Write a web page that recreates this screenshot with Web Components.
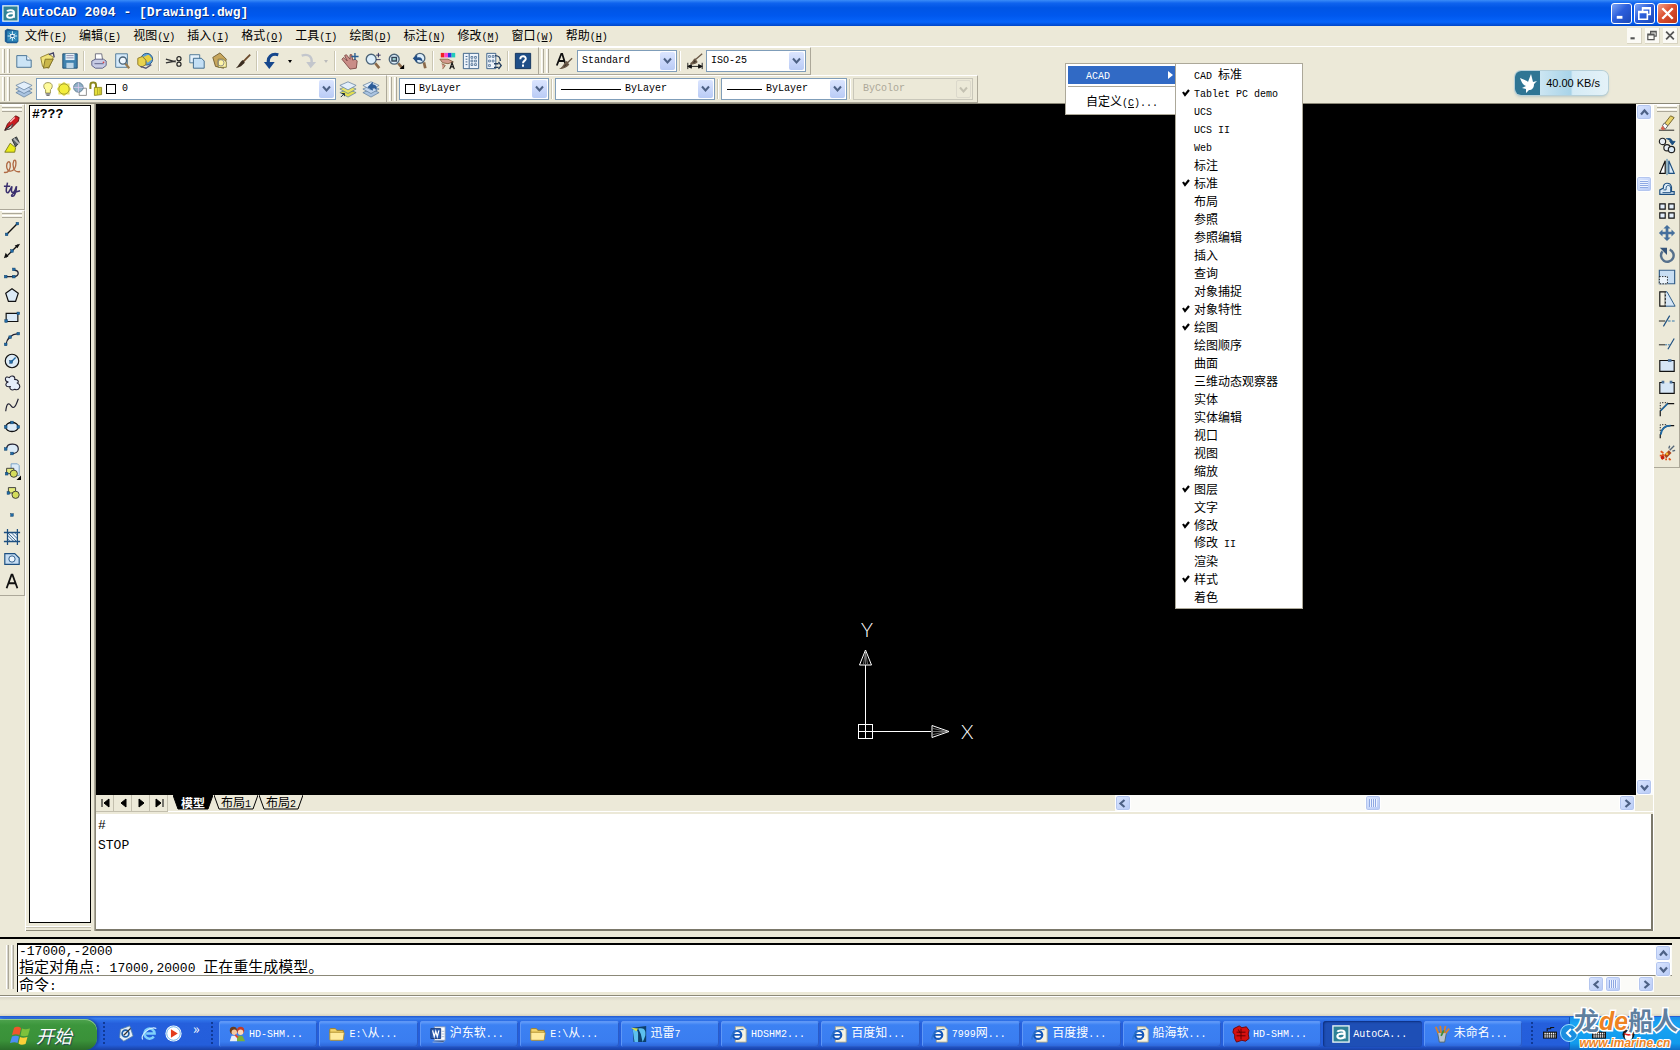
<!DOCTYPE html>
<html lang="zh-CN">
<head>
<meta charset="utf-8">
<title>AutoCAD 2004 - [Drawing1.dwg]</title>
<style>
html,body{margin:0;height:100%}
body{background:#ece9d8;overflow:hidden;font:12px/16px "Noto Sans CJK SC","Liberation Sans",sans-serif;color:#000}
</style>
</head>
<body>
<cad-app></cad-app>
<script>
const page='<path d="M3 4h10l4 4v8H3z" fill="#d5eafa" stroke="#4a7494"/>';
const ie='<path d="M6 2h9l3 3v14H6z" fill="#f6f4e4" stroke="#aaa78c"/><circle cx="8" cy="11" r="4.500" fill="#fff" stroke="#1457b8" stroke-width="2.400"/><path d="M4 11h8" stroke="#1457b8" stroke-width="1.800"/><path d="M1 16C1 9 8 4 15 5" fill="none" stroke="#2c74cc" stroke-width="1.500"/>';
const folder='<path d="M2 5q0-1 1-1h5l2 2h7v3H2z" fill="#f3d46c" stroke="#a07d1c"/><path d="M2 16V9q0-1 1-1h14q1 0 1 1l-1 7q0 1-1 1H3q-1 0-1-1z" fill="#ffea9c" stroke="#b18d28"/>';
const lens=(x,y,r)=>`<path d="M${x+r-1} ${y+r-1}L17 18" stroke="#8b6a4a" stroke-width="3"/><circle cx="${x}" cy="${y}" r="${r}" fill="#dceefb" stroke="#4c6478" stroke-width="1.500"/>`;
const stack=(c)=>`<path d="M1 14l9-4 9 4-9 5z" fill="${c}" stroke="#5e7c9c" stroke-width=".8"/><path d="M1 10l9-4 9 4-9 5z" fill="#c2d6ee" stroke="#5e7c9c" stroke-width=".8"/><path d="M1 6l9-4 9 4-9 5z" fill="#e3effb" stroke="#5e7c9c" stroke-width=".8"/>`;
const dot=(x,y)=>`<rect x="${x-1.5}" y="${y-1.5}" width="3" height="3" fill="#206ba6" stroke="#123f66" stroke-width=".5"/>`;
const ICONS={
acad:'<rect x="1" y="1" width="18" height="18" fill="#2f8296" stroke="#e8f4f6" stroke-width="1.500"/><path d="M6 7.500c1-2 8-2 8 1V15M14 10c-4-1-8 0-8 2.600 0 3 6 3.400 8 0" fill="none" stroke="#fff" stroke-width="2.400"/>',
dwg:'<path d="M1 3l3-2 14 2v14l-2 2H4l-3-2z" fill="#1c5c94"/><path d="M4 4h13v13H4z" fill="#2e86b8"/><path d="M10.500 4v12M4.500 10h12M7 7l7 7M14 7l-7 7" stroke="#d9f2ff" stroke-width="1.200"/><rect x="8.500" y="8" width="4" height="4" fill="#1c5c94" stroke="#fff"/>',
newf:'<path d="M2 4h11l5 5v8H2z" fill="#cbe4f6" stroke="#3f6c90"/><path d="M13 4v5h5" fill="#f2f9ff" stroke="#3f6c90"/>',
open:'<path d="M3 6l9-4 5 4-5 12-7-2z" fill="#f1e37a" stroke="#8f7d2c"/><path d="M8 8h9l-5 9-6 1z" fill="#c9b64a" stroke="#7c6d25"/><path d="M12 3l5-2 1 5" fill="none" stroke="#446" stroke-width="1.500"/>',
save:'<path d="M2 2h16v16H2z" fill="#3f82ae" stroke="#1e4b6e"/><path d="M5 2h10v7H5z" fill="#e6f1f8"/><path d="M6 12h8v6H6z" fill="#bcd6e8"/><path d="M6 4h8M6 6.500h8" stroke="#88a"/>',
print:'<path d="M6 9V2h7l1 7" fill="#fff" stroke="#667"/><path d="M2 10l4-2h9l3 2v5l-4 3H6l-4-3z" fill="#c7cbe4" stroke="#565a80"/><path d="M5 13h10" stroke="#565a80"/><circle cx="15" cy="11.500" r="1" fill="#d44"/>',
preview:'<path d="M3 2h13v15H3z" fill="#d5eafa" stroke="#4a7494"/><path d="M13 12l5 6" stroke="#9a7b4f" stroke-width="2.500"/><circle cx="11" cy="9.500" r="4" fill="#f0f8ff" stroke="#4c6478" stroke-width="1.500"/>',
publish:'<circle cx="12" cy="8" r="6.500" fill="#5da0d8" stroke="#255784"/><path d="M8 5c3 1 4-3 7-1l3 4-5 4z" fill="#e8cf3e"/><path d="M2 7l5-2 4 4v5l-5 3-4-3z" fill="#e8d34f" stroke="#8a7420"/><path d="M5 16l6 2 6-4" fill="none" stroke="#557" stroke-width="1.500"/>',
cut:'<path d="M1 8l11 3M1 12l11-2" stroke="#333" stroke-width="1.500"/><circle cx="15.500" cy="7.500" r="2.300" fill="none" stroke="#222" stroke-width="1.300"/><circle cx="15.500" cy="13.500" r="2.300" fill="none" stroke="#222" stroke-width="1.300"/>',
copy:'<path d="M2 3h11v9H2z" fill="#e4f1fb" stroke="#4a7494"/><path d="M6 7h9l3 3v8H6z" fill="#c3dff5" stroke="#356287"/>',
paste:'<path d="M2 6l8-5 7 7-3 10-9-2z" fill="#c7a65c" stroke="#6e5a2c"/><path d="M8 8h6l3 3v6H8z" fill="#fff6a8" stroke="#7d7540"/><circle cx="11" cy="12" r="3.500" fill="none" stroke="#888"/>',
match:'<path d="M18 3l-8 8" stroke="#6b4a2c" stroke-width="2"/><path d="M10 9l2 3c-3 3-5 5-10 6 4-3 4-7 8-9z" fill="#3b2d20"/>',
undo:'<path d="M17 3C9 1 5 6 6 12" fill="none" stroke="#15468c" stroke-width="3.500"/><path d="M1 11h12l-6 8z" fill="#15468c"/>',
redo:'<path d="M3 4c8-3 12 2 11 8" fill="none" stroke="#c3c6cc" stroke-width="2.500"/><path d="M8 11h11l-6 7z" fill="#c3c6cc"/>',
pan:'<path d="M1 8l2-2 4 4-3-6 2-1 4 5V3h2l1 6 3-1 2 2-1 8-7 1z" fill="#c98d87" stroke="#7d4845"/><path d="M15.500 1v8M11.500 5h8" stroke="#2a5e92" stroke-width="1.500"/>',
zoomrt:lens(8,8,5.5)+'<path d="M16 1v5M13.500 3.500h5M13.500 8.500h5" stroke="#225"/>',
zoomwin:lens(8,8,5.5)+'<path d="M5.500 6h5v4h-5z" fill="#9cc" stroke="#345" stroke-width="1.500"/><path d="M19 14v5h-5z" fill="#000"/>',
zoomprev:lens(11,7,5.5)+'<path d="M3 7l5-4v3c4-1 6 1 6 5-2-2-3-2-6-2v3z" fill="#234f86"/>',
props:'<path d="M2 1h4v5H2z" fill="#e22"/><path d="M6 1h4v5H6z" fill="#f4c"/><path d="M10 1h4v5h-4z" fill="#33d"/><path d="M14 1h4v5h-4z" fill="#2cb"/><path d="M1 8h9l6 3-6 2-6-1zM3 13l4 2-3 4" fill="#d49a8e" stroke="#864"/><path d="M12 19l2.500-7 2.500 7M13 16.500h3" fill="none" stroke="#111" stroke-width="1.300"/>',
dc:'<path d="M1.500 1.500h17v17h-17z" fill="#eef4fb" stroke="#335a84"/><path d="M8 2v16" stroke="#335a84"/><path d="M4 5h2M4 8h2M4 11h2M4 14h2" stroke="#335a84"/><path d="M10 5h2v2h-2zM14 5h2v2h-2zM10 9h2v2h-2zM14 9h2v2h-2zM10 13h2v2h-2zM14 13h2v2h-2z" fill="#fff" stroke="#335a84" stroke-width=".8"/>',
palettes:'<path d="M2 1.500h10v17H2z" fill="#eef4fb" stroke="#335a84"/><path d="M4 4h2v2H4zM8 4h2v2H8zM4 9h2v2H4zM8 9h2v2H8zM4 14h2v2H4z" fill="#fff" stroke="#335a84" stroke-width=".8"/><path d="M11 4c5 0 6 2 6 6M10 13h5M10 17h5M15 11l3 4-3 4" fill="none" stroke="#223c5c" stroke-width="1.500"/>',
help:'<path d="M1.500 1.500h17v17h-17z" fill="#1f4f88" stroke="#0d2f59"/><path d="M7 8c0-5 7-4 6 0-.5 2-3 2-3 4.500M10 14v2.500" fill="none" stroke="#fff" stroke-width="2.200"/>',
tstyle:'<path d="M2 15L7 2h1l4 13M4 10h6" fill="none" stroke="#111" stroke-width="2"/><path d="M19 7l-7 7M13 11l2 3c-2 2-4 4-8 4 3-2 3-5 6-7z" stroke="#6b5a48" fill="#3b3128" stroke-width="1.500"/>',
dstyle:'<path d="M2 12v7M18 12v7M2 16h16M6 14l-4 2 4 2zM14 14l4 2-4 2z" fill="#111" stroke="#111"/><path d="M18 2l-8 7M10 8l2 3c-2 2-4 2-7 2 3-1 3-4 5-5z" stroke="#6b5a48" fill="#3b3128" stroke-width="1.500"/>',
layers:stack('#a9c3e0'),
layercur:stack('#e3de4e').replace('#c2d6ee','#e8e36a')+'<path d="M2 19l4-4M3 15h3v3" stroke="#123" fill="none"/>',
layerprev:stack('#a9c3e0')+'<path d="M6 8l6-6v3c4 0 5 3 4 7-1-3-3-3-4-3v3z" fill="#2b5c98"/>',
bulb:'<path d="M10 2c7 0 6 7 3 9v4H7v-4C4 9 3 2 10 2z" fill="#fffb9c" stroke="#8b8440"/><path d="M7 16h6M8 18h4" stroke="#777" stroke-width="1.500"/>',
sun:'<path d="M10 1l3 2 4 0 0 4 2 3-2 3 0 4-4 0-3 2-3-2-4 0 0-4-2-3 2-3 0-4 4 0z" fill="#ece56b"/><circle cx="10" cy="10" r="6.500" fill="#f3ee3c" stroke="#8f8a22"/>',
vp:'<path d="M9 9h9v9H9z" fill="#fff" stroke="#777"/><circle cx="8" cy="8" r="6" fill="#8fb0c6" stroke="#55738a"/><path d="M8 2v12M2 8h12" stroke="#dce"/>',
lock:'<path d="M3 10V5c0-4 7-4 7 0v4" fill="none" stroke="#8a861c" stroke-width="2.500"/><path d="M8 8h9v9l-9 1z" fill="#e6e03c" stroke="#837d18"/><path d="M12 8v9M15 8v9" stroke="#a49e26"/>',
pen:'<path d="M2 18l3-7L14 2l4 2-1 4-8 8z" fill="#cc1c20" stroke="#5c1010"/><path d="M8 9l5-5" stroke="#fbb" stroke-width="1.500"/><path d="M2 18l7-2 2-5z" fill="#d8d8d8" stroke="#444"/><path d="M2 18l6-5" stroke="#222"/>',
marker:'<path d="M10 4l5-3 3 6-4 5z" fill="#596265" stroke="#2a2f30"/><path d="M8 8l6 5-1 5H2z" fill="#e9ea18" stroke="#77781c"/><path d="M12 3l6 6" stroke="#bbb" stroke-width="2"/>',
scribble:'<path d="M1 16c5 1 8-4 7-10-1-4-4-1-4 3 0 8 8 7 10 0 1-5 0-8-2-6-2 4-1 14 7 12" fill="none" stroke="#b06a44" stroke-width="1.500"/>',
ty:'<path d="M5 3c-1 5-3 12 1 11l4-7c-1 5-1 7 1 7s3-5 4-7c0 5-2 12-5 11-2-1 3-5 9-6M1 7h7" fill="none" stroke="#3a2f6e" stroke-width="1.700"/>',
line:'<path d="M4 16L16 4" stroke="#111" stroke-width="1.500"/>'+dot(4,16)+dot(16,4),
xline:'<path d="M3 17L17 3" stroke="#111" stroke-width="1.500"/><path d="M1 18l2-6 3 4zM19 2l-6 2 3 3z" fill="#111"/>'+dot(10,10),
pline:'<path d="M3 14h9c7 0 6-8 0-7" fill="none" stroke="#223" stroke-width="1.500"/>'+dot(3,14)+dot(12,14)+dot(12,6),
polygon:'<path d="M10 3l7 5-3 9H6L3 8z" fill="#dcebf7" stroke="#111" stroke-width="1.300"/>',
rect:'<path d="M3.500 6h13v9h-13z" fill="#dcebf7" stroke="#111" stroke-width="1.300"/>'+dot(3.5,14.5)+dot(17,6),
arc:'<path d="M3 17Q5 5 17 4" fill="none" stroke="#223" stroke-width="1.300"/>'+dot(3,16)+dot(8,8)+dot(17,4),
circle:'<circle cx="10" cy="10" r="7.500" fill="#dcebf7" stroke="#111" stroke-width="1.300"/><path d="M9 11l5-5" stroke="#206ba6" stroke-width="1.500"/>'+dot(9,11),
cloud:'<path d="M6 9C1 8 2 1 7 4c2-3 7-2 6 2 4 0 5 3 3 4 5 3 2 9-3 7-4 2-6-1-5-3-6 1-6-4-2-5z" fill="#e6eefa" stroke="#223" stroke-width="1.200"/>',
spline:'<path d="M3 17C4 8 6 7 9 11s5 1 8-8" fill="none" stroke="#223" stroke-width="1.300"/>',
ellipse:'<ellipse cx="10" cy="10" rx="7" ry="5" fill="#dcebf7" stroke="#111" stroke-width="1.400"/>'+dot(3,10)+dot(17,10)+dot(10,5),
earc:'<path d="M4 9c1-6 13-6 13 1 0 3-3 5-7 5" fill="#dcebf7" stroke="#223" stroke-width="1.400"/>'+dot(3,10)+dot(10,15),
iblock:'<path d="M9 2h7l2 2v11H9z" fill="#dcebf7" stroke="#6f9cc4"/><path d="M4 7h8v6H4z" fill="#e3ea7a" stroke="#333"/><circle cx="12" cy="13" r="4" fill="#d4dc5c" stroke="#333"/>'+dot(4,13)+'<path d="M20 15v5h-5z" fill="#000"/>',
mblock:'<path d="M6 4h8v6H6z" fill="#e3ea7a" stroke="#333"/><circle cx="14" cy="12" r="4" fill="#d4dc5c" stroke="#333"/>'+dot(6,10),
point:dot(10,10),
hatch:'<path d="M5 5h11v10H5z" fill="#e8f1fa"/><path d="M5 8l7 7M5 5l10 10M9 5l7 7M13 5l3 3M5 12l3 3" stroke="#356287"/><path d="M1 5h18M1 15h18M5 1v18M16 1v18" stroke="#1d4f80" stroke-width="1.400"/>',
region:'<path d="M2 4h11l5 5v7H2z" fill="#c6ddf3" stroke="#1d4f80" stroke-width="1.300"/><circle cx="10" cy="10" r="3.500" fill="#eef6fd" stroke="#1d4f80"/>',
mtext:'<path d="M4 18L9.500 3h1L16 18M6 12.500h8" fill="none" stroke="#111" stroke-width="2"/>',
erase:'<path d="M1 18h17" stroke="#111"/><path d="M7 11l7-9 4 2-7 9z" fill="#e9d26a" stroke="#6b5c24"/><path d="M5 13l2-3 4 3-3 4z" fill="#fff" stroke="#555"/><path d="M3 16l2-3 3 4-3 1z" fill="#d8604c"/>',
rcopy:'<circle cx="5" cy="6" r="3.500" fill="#e8eef6" stroke="#222" stroke-width="1.300"/><circle cx="10" cy="13" r="3.500" fill="#e8eef6" stroke="#222" stroke-width="1.300"/><circle cx="15" cy="15" r="3.500" fill="#dcebf7" stroke="#222" stroke-width="1.300"/><path d="M9 3c5-1 7 1 7 4M13 6h6l-3 4z" fill="#1d4f80" stroke="#1d4f80"/>',
mirror:'<path d="M8 3v14H2z" fill="#fff" stroke="#111" stroke-width="1.300"/><path d="M12 3v14h6z" fill="#dcebf7" stroke="#1d4f80" stroke-width="1.300"/><path d="M10 1v18" stroke="#206ba6"/>',
offset:'<path d="M2 16h16v-3h-3V8c-1-6-10-6-9 1l-4 2z" fill="#dcebf7" stroke="#1d4f80" stroke-width="1.300"/><path d="M5 14h9V9c0-4-5-4-5 0v2H6" fill="none" stroke="#1d4f80"/>',
array:'<path d="M2 2h6v6H2zM12 2h6v6h-6zM2 12h6v6H2zM12 12h6v6h-6z" fill="#e3eefa" stroke="#111" stroke-width="1.300"/>',
move:'<path d="M10 1l4 4h-2.500v3.500H15V6l4 4-4 4v-2.500h-3.500V15H14l-4 4-4-4h2.500v-3.500H5V14l-4-4 4-4v2.500h3.500V5H6z" fill="#456f9c"/>',
rotate:'<path d="M5 6a7 7 0 1 0 8-2" fill="none" stroke="#56708c" stroke-width="2.700"/><path d="M2 2h8v8z" fill="#365478"/>',
scale:'<path d="M1.500 2.500h17v15h-17z" fill="#c8def3" stroke="#355f8a" stroke-width="1.300"/><path d="M1.500 9.500h9v8h-9z" fill="#ecf4fb" stroke="#111" stroke-dasharray="1.500 1.500"/>',
stretch:'<path d="M8 2h2l9 16H8z" fill="#d6e6f6" stroke="#1d4f80"/><path d="M2 2h6v16H2z" fill="#f4f1e4" stroke="#111" stroke-width="1.300"/><path d="M8 3v14" stroke="#f4f1e4" stroke-dasharray="2"/>',
trim:'<path d="M1 10h7" stroke="#111"/><path d="M11 10h8" stroke="#206ba6" stroke-dasharray="3 1.500"/><path d="M13 4L6 16" stroke="#1d4f80" stroke-width="1.300"/>',
extend:'<path d="M1 12h7" stroke="#111"/><path d="M8 12h5" stroke="#206ba6" stroke-dasharray="2 1"/><path d="M18 5l-7 12" stroke="#1d4f80" stroke-width="1.300"/>',
breakp:'<path d="M2 5h16v12H2z" fill="#d6e6f6" stroke="#111" stroke-width="1.300"/><path d="M11 3.500h4v3h-4z" fill="#4b7098"/>',
brk:'<path d="M6 5H2v12h16V5h-4" fill="#d6e6f6" stroke="#111" stroke-width="1.300"/><path d="M4 3h3v3H4zM13 3h3v3h-3z" fill="#4b7098"/>',
chamfer:'<path d="M2.500 18v-6l8-8H18" fill="none" stroke="#111" stroke-width="1.300"/><path d="M3 12l8-8" stroke="#206ba6" stroke-width="1.600"/><path d="M2.500 10V3H11" fill="none" stroke="#111" stroke-dasharray="1.500 1.500"/>',
fillet:'<path d="M2.500 18v-4C4 7 8 4 14 4h4" fill="none" stroke="#111" stroke-width="1.300"/><path d="M3 14C4 7 8 4 14 4" fill="none" stroke="#206ba6" stroke-width="2"/><path d="M2.500 10V3H10" fill="none" stroke="#111" stroke-dasharray="1.500 1.500"/>',
explode:'<path d="M7 12l5-5 3 3-6 6z" fill="#a8431c"/><path d="M13 7l5-5M16 8l3-1M12 5l1-3" stroke="#567" stroke-width="1.500"/><path d="M3 8l3 2M2 13h3M4 17l3-2M9 18v-2M12 16l2 2M5 11l2 3" stroke="#e0541c" stroke-width="2"/><circle cx="5" cy="15" r="2" fill="#c41c10"/><circle cx="10" cy="11" r="1.500" fill="#f3b02c"/>',
flag:'<path d="M4 3c3-2 5-1 7 0L9.500 10C7 9 5 9 2 10z" fill="#f0562c"/><path d="M12 3.500c2 1 4 1 8 0l-2 7c-3 1-5 1-7.500 0z" fill="#7cc23c"/><path d="M2 11.500c3-1.300 5-1 7 0l-1.500 6.500c-2-1-4-1-7.500 0z" fill="#4c8ef4"/><path d="M10 12c2 1 4 1 7.500 0l-2 7c-3 1-5 1-7-.5z" fill="#fbd038"/>',
desk:'<path d="M4 5l11-4 4 12-11 6-5-4z" fill="#e4eef8" stroke="#557fa8"/><circle cx="10" cy="10" r="4" fill="none" stroke="#1f5fa8" stroke-width="2"/><path d="M8 12l8-8" stroke="#333" stroke-width="1.500"/>',
e:'<path d="M15 13.500A6 6 0 1 1 16 10H6" fill="none" stroke="#7fd0fb" stroke-width="3"/><path d="M2 17C-1 12 10 1 18 4" fill="none" stroke="#d6f0ff" stroke-width="1.300"/>',
play:'<circle cx="10" cy="10" r="9.500" fill="#fff"/><circle cx="10" cy="10" r="8" fill="none" stroke="#5cabe9"/><path d="M7 5l8 5-8 5z" fill="#e43c1c"/>',
people:'<circle cx="6" cy="6" r="4" fill="#6b3b1c"/><circle cx="7" cy="8" r="3" fill="#f4c9a0"/><circle cx="14" cy="6" r="4" fill="#c23c28"/><circle cx="14" cy="8" r="3" fill="#fbd9bb"/><path d="M2 18l2-6h6v6z" fill="#e8eef8"/><path d="M10 18v-6h6l3 6z" fill="#79b13c"/><path d="M8 11l3 3" stroke="#d43" stroke-width="2"/>',
folder, ie,
word:'<path d="M6 2h12v15H6z" fill="#fff" stroke="#7c93b8"/><path d="M2 4h11v11H2z" fill="#2d5cae" stroke="#173a7c"/><path d="M4 6l1.800 7 1.700-6 1.700 6L11 6" fill="none" stroke="#fff" stroke-width="1.400"/><path d="M14 7h3M14 10h3M14 13h3M4 19h12l1-1" stroke="#9db2d4"/>',
thunder:'<path d="M3 3l15-2v18H4z" fill="#0d3f6c"/><path d="M3 5c5-1 6 2 6 5v9H5zM9 4c7-2 9 2 8 8-1 3-2 5-3 7l-2-9z" fill="#5cc0ee"/><path d="M1 3l8 1-2 3z" fill="#d6e04c"/>',
red:'<path d="M2 4l6-3 3 2 5-1 3 4-1 4 1 5-4 3-4-1-6 2-2-4 0-4-2-3z" fill="#d51010" stroke="#6c0505"/><path d="M5 8h10M5 12h10M10 4v12M7 5l2 4" stroke="#5c0000"/>',
paint:'<path d="M5 8h10l-2 11H7z" fill="#b9c3cf" stroke="#566"/><path d="M6 9L3 2M9 9L8 1M12 9l2-8M14 9l4-5" stroke="#d8802c" stroke-width="2"/><path d="M9 12l3-6" stroke="#3c8c3c" stroke-width="2"/>',
kbd:'<path d="M0 8h20v10H0z" fill="#111"/><path d="M2 10.500h16M2 13h16M2 15.500h16" stroke="#fff" stroke-width="1.500" stroke-dasharray="2 1"/><path d="M6 7V4h5V2h5" fill="none" stroke="#111" stroke-width="1.500"/>',
qq:'<ellipse cx="10" cy="11" rx="7" ry="7" fill="#1b1b1b"/><circle cx="10" cy="6" r="4.500" fill="#1b1b1b"/><ellipse cx="10" cy="13" rx="4.500" ry="5" fill="#fff"/><path d="M5 9q5 3 10 0v2q-5 3-10 0z" fill="#e02020"/><circle cx="8.500" cy="5" r="1.200" fill="#fff"/><circle cx="11.500" cy="5" r="1.200" fill="#fff"/><path d="M8 7.500h4l-2 1.500z" fill="#f5a623"/>',
bird:'<path d="M2 5l7 3 1 1 3-8 2 8 4-1-3 3c0 4-2 6-5 6l-3 3 0-4-4-1 4-2c-3-1-4-3-6-8z" fill="#fff"/>'
};
const M='.m{font-family:"Liberation Mono",monospace;font-size:var(--m,10px)}';
const esc=s=>s.replace(/&/g,'&amp;').replace(/</g,'&lt;');
/* Latin runs use a half-width face beside the full-width Chinese glyphs */
const T=s=>s.replace(/[\x20-\x7e]+/g,r=>'<span class="m">'+esc(r).replace(/\(([A-Z])\)/,'(<u>$1</u>)')+'</span>');
const def=(n,css,html)=>customElements.define(n,class extends HTMLElement{
 connectedCallback(){if(this.shadowRoot)return;
  const r=this.attachShadow({mode:'open'});
  r.innerHTML='<style>*{box-sizing:border-box}'+M+css+'</style>'+(typeof html==='function'?html(this):html);}});
const A=(e,n,d='')=>e.getAttribute(n)??d;
const ic=(n,s=18)=>`<app-icon name="${n}" size="${s}"></app-icon>`;

def('app-icon',':host{display:inline-flex;flex:none}svg{display:block}',e=>`<svg aria-hidden="true" width="${A(e,'size','18')}" height="${A(e,'size','18')}" viewBox="0 0 20 20">${ICONS[A(e,'name')]||''}</svg>`);

const WIN={min:'<path d="M5 14h6" stroke="currentColor" stroke-width="3"/>',
max:'<path d="M8 8V4h8v7h-3M4 8h9v8H4zM4 9h9M8 5h8" fill="none" stroke="currentColor" stroke-width="1.700"/>',
close:'<path d="M4.500 4.500l11 11M15.500 4.500l-11 11" stroke="currentColor" stroke-width="2.500"/>'};
def('window-button',':host{display:block}button{display:block;padding:0;width:21px;height:21px;border:1px solid #fff;border-radius:3px;color:#fff;background:linear-gradient(135deg,#7fa6f5,#2c5fdc 45%,#1c49b8)}:host([kind=close]) button{background:linear-gradient(135deg,#f0a08a,#dc5030 45%,#b8341a)}:host([flat]) button{width:15px;height:16px;border:0;border-bottom:1px solid #d8d4c2;border-right:1px solid #d8d4c2;border-radius:0;background:#fbfaf5;color:#555}svg{display:block;width:100%;height:100%}',
e=>`<button aria-label="${A(e,'kind')}"><svg viewBox="0 0 20 20">${WIN[A(e,'kind')]}</svg></button>`);

def('title-bar',':host{display:flex;align-items:center;height:26px;padding:0 2px;gap:3px;background:linear-gradient(#3a8cf8,#0f63ee 12%,#0055e5 30%,#0058ee 60%,#0664fa 85%,#0046c8)}h1{flex:1;margin:0;font:bold 13px/20px "Liberation Mono",monospace;color:#fff;text-shadow:1px 1px #0a2f80}div{display:flex;gap:2px}',
ic('acad',17)+'<h1>AutoCAD 2004 - [Drawing1.dwg]</h1><div><window-button kind="min"></window-button><window-button kind="max"></window-button><window-button kind="close"></window-button></div>');

def('menu-bar',':host{display:flex;align-items:center;height:21px;padding:0 2px 0 4px;border-bottom:1px solid #fff}nav{flex:1;display:flex;gap:12px;margin-left:5px}a{color:#000;text-decoration:none;line-height:16px;white-space:nowrap}div{display:flex;gap:3px}',
ic('dwg',16)+'<nav>'+['文件(F)','编辑(E)','视图(V)','插入(I)','格式(O)','工具(T)','绘图(D)','标注(N)','修改(M)','窗口(W)','帮助(H)'].map(t=>`<a href="#">${T(t)}</a>`).join('')+'</nav><div><window-button flat kind="min"></window-button><window-button flat kind="max"></window-button><window-button flat kind="close"></window-button></div>');

def('tool-button',':host{display:flex;flex:none;width:23px;height:22px}button{flex:1;display:flex;align-items:center;justify-content:center;padding:0;border:0;background:none}',
e=>`<button aria-label="${A(e,'icon')}">${ic(A(e,'icon'),A(e,'size','18'))}</button>`);
def('tool-drop',':host{display:flex;flex:none;width:13px;align-items:center;justify-content:center}i{border:2px solid transparent;border-top:3px solid var(--c,#000);border-bottom:0}','<i></i>');
def('tool-sep',':host{display:block;flex:none;width:6px;height:20px;background:linear-gradient(90deg,transparent 2px,#cbc7b3 2px 3px,#fff 3px 4px,transparent 4px)}','');
def('tool-bar',`:host{display:flex;align-items:center;padding-right:4px;border:1px solid;border-color:#fff #aca899 #aca899 #fff;border-left:0}
.grip{flex:none;width:12px;height:24px;background:linear-gradient(90deg,transparent 2px,#fff 2px 3px,#f4f2e8 3px 4px,#aca899 4px 5px,transparent 5px 7px,#fff 7px 8px,#f4f2e8 8px 9px,#aca899 9px 10px,transparent 10px)}
:host([vertical]){flex-direction:column;padding:0 0 3px}
:host([vertical]) .grip{width:20px;height:7px;background:linear-gradient(#fff 0 1px,#f4f2e8 1px 2px,#aca899 2px 3px,transparent 3px 4px,#fff 4px 5px,#f4f2e8 5px 6px,#aca899 6px 7px)}`,'<div class="grip"></div><slot></slot>');

def('combo-box',`:host{display:flex;flex:none;position:relative;width:var(--w);height:22px;border:1px solid #7f9db9;background:#fff}
select{appearance:none;flex:1;min-width:0;border:0;outline:0;background:none;padding:0 18px 0 var(--pad,4px);font:10px/20px "Liberation Mono",monospace;color:#000}
.lead{position:absolute;left:3px;top:0;height:20px;display:flex;align-items:center;gap:0;pointer-events:none}
b{width:10px;height:10px;border:1px solid #000;background:#fff;margin-left:2px}
hr{width:var(--rule,60px);margin:0 0 0 2px;border:0;border-top:1px solid #000}
.btn{position:absolute;right:1px;top:1px;width:15px;height:18px;border-radius:2px;background:linear-gradient(#dbe5ff,#b9cbf5);pointer-events:none}
svg{display:block;margin:5px auto}
:host([off]){border-color:#c9c7ba;background:#ece9d8}:host([off]) select{color:#aca899;opacity:1}:host([off]) .btn{background:#ece9d8;border:1px solid #dcd9cc;color:#c9c7ba}`,
e=>`<select aria-label="${A(e,'label')}" ${e.hasAttribute('off')?'disabled':''}><option>${A(e,'value')}</option></select><span class="lead">${A(e,'icons').split(' ').filter(Boolean).map(n=>n=='box'?'<b></b>':n=='rule'?'<hr>':ic(n,16)).join('')}</span><span class="btn"><svg width="9" height="8" viewBox="0 0 9 8"><path d="M1 1.500l3.500 4L8 1.500" fill="none" stroke="${e.hasAttribute('off')?'#c4c1b2':'#4d6185'}" stroke-width="2"/></svg></span>`);

const dirs={up:'M2 7.500l3.500-4 3.500 4',down:'M2 3.500l3.500 4 3.500-4',left:'M7.500 2l-4 3.500 4 3.500',right:'M3.500 2l4 3.500-4 3.500'};
def('scroll-bar',`:host{display:flex;background:#fbfbf8;gap:0}:host([dir=v]){flex-direction:column;width:17px}:host([dir=h]){height:16px}
button,.thumb{flex:none;width:16px;height:16px;padding:0;border:1px solid #fff;border-radius:3px;background:linear-gradient(135deg,#dbe6ff,#b7caf5);box-shadow:inset 0 0 0 1px #b4c6ef;display:flex;align-items:center;justify-content:center}
.thumb i{width:8px;height:8px;background:repeating-linear-gradient(var(--a),#8fa9e3 0 1px,#eef4ff 1px 2px)}
.s{min-width:0}`,
e=>{const v=A(e,'dir')=='v';const[b,a]=A(e,'at','1 1').split(' ');const bt=d=>`<button aria-label="${d}"><svg width="11" height="11"><path d="${dirs[d]}" fill="none" stroke="#4d6185" stroke-width="2.200"/></svg></button>`;
return bt(v?'up':'left')+(e.hasAttribute('bare')?'<div style="flex:1"></div>':`<div class="s" style="flex:${b}"></div><div class="thumb" style="--a:${v?'0deg':'90deg'}"><i></i></div><div class="s" style="flex:${a}"></div>`)+bt(v?'down':'right')});

def('drawing-canvas',':host{display:block;position:relative;background:#000;overflow:hidden}svg{position:absolute;left:50%;bottom:0;margin-left:-20px}text{font:300 20px Lato,"Liberation Sans",sans-serif;fill:#fff}',
'<svg width="140" height="180" viewBox="0 0 140 180" fill="none" stroke="#fff"><g shape-rendering="crispEdges"><path d="M12.500 109.500h14v14h-14zM19.500 123V50M12.500 116.500H85"/></g><path d="M19.500 35l-6 15h12z"/><path d="M19.500 37l-2 12M19.500 37l2 12M19.500 37v12" stroke="#999" stroke-width=".7"/><path d="M103 116.500l-17-6v12z"/><path d="M101 116.500l-14-3M101 116.500l-14 3M101 116.500H87" stroke="#999" stroke-width=".7"/><text x="15" y="22" stroke="none">Y</text><text x="115" y="124" stroke="none">X</text></svg>');

def('layout-tabs',`:host{display:flex;height:17px;align-items:stretch}button{padding:0;background:none;border:0}
.nav{width:18px;border-right:1px solid #c3bfae;border-bottom:1px solid #c3bfae;display:flex;align-items:center;justify-content:center}
.tabs{display:flex;margin-left:5px}.tab{position:relative;height:15px;width:44px;margin-right:1px;font:12px/14px "Noto Sans CJK SC",sans-serif;z-index:0;white-space:nowrap}
.tab svg{position:absolute;left:0;top:0;z-index:-1}.on{color:#fff;font-weight:bold;width:40px}`,
()=>['M4 1v8M11 1v8L6 5z','M10 1v8L5 5z','M5 1v8l5-4z','M4 1v8l5-4zM11 1v8'].map((d,i)=>`<button class="nav" aria-label="nav${i}"><svg width="14" height="10"><path d="${d}" fill="#000" stroke="#000"/></svg></button>`).join('')+
'<div class="tabs">'+[['模型',1],['布局1',0],['布局2',0]].map(([t,on])=>{const w=on?40:44;return`<button class="tab ${on?'on':''}"><svg width="${w}" height="15"><path d="M0 0l5 14h${w-10}l5-14" fill="${on?'#000':'#ece9d8'}" stroke="#000"/></svg>${T(t)}</button>`}).join('')+'</div>');

def('text-panel',':host{display:block;background:#fff;border-right:2px solid #7b786a;border-bottom:2px solid #7b786a;padding:2px 2px 0}p{margin:0;font:13px/20px "Liberation Mono",monospace}','<p>#</p><p>STOP</p>');

def('ink-panel',':host{display:flex;flex-direction:column;width:71px;padding:1px 4px 0 3px;border-left:1px solid #fff;border-right:1px solid #8b8878;box-shadow:inset -1px 0 #aca899}textarea{flex:1;width:100%;min-height:0;resize:none;border:1px solid #000;border-radius:0;outline:0;padding:0 2px;background:#fff;font:bold 13px/17px "Liberation Mono",monospace;color:#000;overflow:hidden}div{height:8px;margin:0 0 0 -3px;border-bottom:1px solid #8b8878;background:linear-gradient(transparent 3px,#fff 3px 4px,#c6c2b0 4px 5px,transparent 5px)}','<textarea aria-label="ink">#???</textarea><div></div>');

def('command-line',`:host{display:flex;height:59px;margin-top:6px;border-top:2px solid #000;padding:4px 0 0 5px;border-bottom:1px solid #8b8878;--m:13px}
.grip{width:12px;margin:2px 0 6px;background:linear-gradient(90deg,transparent 1px,#fff 1px 2px,#aca899 3px 4px,transparent 4px 6px,#fff 6px 7px,#aca899 8px 9px,transparent 9px)}
.box{flex:1;display:flex;flex-direction:column;margin-right:8px}
.hist{display:flex;height:33px;background:#fff;border-top:2px solid #000;border-left:1px solid #000;border-bottom:1px solid #8b8878}
.hist div{flex:1;padding-left:1px}p{margin:0;white-space:nowrap;font-size:15px;line-height:15px}p.lat{font:13px/13px "Liberation Mono",monospace}
.in{display:flex;height:16px;border-left:1px solid #000;font-size:15px;line-height:16px}label{background:#fff;padding-left:1px}input{flex:1;min-width:0;border:0;outline:0;padding:0;background:#fff;font:13px "Liberation Mono",monospace}
scroll-bar[dir=h]{width:66px;margin-right:18px}`,
()=>'<div class="grip"></div><div class="box"><div class="hist"><div><p class="lat">-17000,-2000</p><p>'+T('指定对角点: 17000,20000 正在重生成模型。')+'</p></div><scroll-bar dir="v" bare></scroll-bar></div><div class="in"><label for="c">'+T('命令:')+'</label><input id="c"><scroll-bar dir="h" at="1 20"></scroll-bar></div></div>');

def('menu-item',':host{display:flex;align-items:center;height:18px;line-height:18px;white-space:nowrap}button{flex:1;display:flex;align-items:center;height:18px;padding:0;border:0;background:none;color:inherit;font:12px/18px "Noto Sans CJK SC",sans-serif;text-align:left}i{width:18px;flex:none;display:flex;padding-left:6px}span.t{flex:1}:host([hot]){background:#316ac5;color:#fff}',
e=>`<button><i>${e.hasAttribute('checked')?'<svg width="8" height="8"><path d="M1 3l2 3 4-5" fill="none" stroke="#000" stroke-width="2.200"/></svg>':''}</i><span class="t">${T(A(e,'text'))}</span>${e.hasAttribute('sub')?'<svg width="9" height="9"><path d="M2 0l5 4-5 4z" fill="#fff"/></svg>':''}</button>`);
def('popup-menu',':host{display:block;position:absolute;background:#fff;border:1px solid #aca899;padding:2px 0 2px}','<slot></slot>');

def('net-meter',':host{position:absolute;display:flex;align-items:center;width:93px;height:24px;border-radius:6px;overflow:hidden;background:linear-gradient(90deg,#e9f5fa,#a8d3e8 60%,#d5ebf5 62%,#e4f2f8);box-shadow:0 0 0 1px #b6cfd8,0 2px 3px #bcc8c4;font:11px "Liberation Sans",sans-serif}div{width:25px;height:100%;background:#2f7594;display:flex;align-items:center;justify-content:center}span{flex:1;text-align:right;padding-right:8px}','<div>'+ic('bird',20)+'</div><span>40.00 KB/s</span>');

def('task-button',':host{display:block;flex:1;min-width:0}button{display:flex;align-items:center;gap:3px;width:100%;height:26px;padding:0 9px;border:0;border-radius:3px;background:linear-gradient(#6ba3fb,#3c81f3 15%,#3a7df0 80%,#2a62d6);box-shadow:inset 1px 1px #5f97f6,inset -1px -1px #2a5cc8;color:#fff;font:12px/20px "Noto Sans CJK SC",sans-serif;white-space:nowrap;overflow:hidden}:host([on]) button{background:#1e4fb6;box-shadow:inset 1px 1px 2px #0c2e7c}',
e=>`<button>${ic(A(e,'icon'),18)}<span>${T(A(e,'text'))}</span></button>`);
def('task-bar',`:host{display:flex;align-items:center;height:34px;background:linear-gradient(#1f57d0,#3d82ee 8%,#2f72e8 12%,#255fdc 22%,#245edb 85%,#1941a5);overflow:hidden;position:relative}
.start{display:flex;align-items:center;gap:6px;align-self:flex-end;width:97px;height:31px;padding:0 0 0 10px;border:0;border-radius:0 12px 12px 0;background:linear-gradient(#4fa44f,#3c963c 20%,#3a9139 70%,#2a6d2a);box-shadow:inset 0 1px #8fca8c,2px 0 3px #1743a0;color:#fff;font:italic 18px/28px "Noto Sans CJK SC",sans-serif;text-shadow:1px 1px 1px #245}
.dots{width:4px;height:22px;margin:0 4px;background:radial-gradient(circle at 1px 1px,#103a96 1px,transparent 1.500px) 0 0/4px 4px}
.quick{display:flex;align-items:center;gap:7px;width:110px;padding-left:6px;margin-left:8px;color:#fff;font-size:14px}
.quick button,.ime{border:0;background:none;padding:0;display:flex}.quick span{align-self:flex-start;line-height:12px;margin-left:4px}
.tasks{flex:1;display:flex;gap:2px;min-width:0;margin:1px 5px 0 0}
.ime{margin:0 4px}.tray{width:111px;height:33px;display:flex;align-items:center;gap:14px;background:linear-gradient(#1b8fe8,#18a4f4 20%,#119aec 80%,#0f6ec8);box-shadow:inset 1px 0 #0b56b8;padding-left:0}
.c{flex:none;width:18px;height:18px;margin-left:-9px;border:1px solid #9fe0ff;border-radius:50%;background:#1a8ee0;padding:0;display:flex;align-items:center;justify-content:center}`,
()=>`<button class="start">${ic('flag',20)}<span>开始</span></button><div class="quick"><i class="dots" style="margin:0 3px 0 -8px"></i>${['desk','e','play'].map(n=>`<button aria-label="${n}">${ic(n,17)}</button>`).join('')}<span>»</span></div><i class="dots" style="margin-left:-4px"></i><div class="tasks">`+
[['people','HD-SHM...'],['folder','E:\\从...'],['word','沪东软...'],['folder','E:\\从...'],['thunder','迅雷7'],['ie','HDSHM2...'],['ie','百度知...'],['ie','7999网...'],['ie','百度搜...'],['ie','船海软...'],['red','HD-SHM...'],['acad','AutoCA...',1],['paint','未命名...']].map(([i,t,on])=>`<task-button icon="${i}" text="${t}" ${on?'on':''}></task-button>`).join('')+
`</div><i class="dots"></i><button class="ime" aria-label="ime">${ic('kbd',14)}</button><i style="width:8px"></i><div class="tray"><button class="c" aria-label="hide"><svg width="8" height="10"><path d="M6 1L2 5l4 4" fill="none" stroke="#fff" stroke-width="2"/></svg></button>${ic('kbd',14)}${ic('qq',17)}</div>`);

def('site-mark',':host{position:absolute;right:4px;bottom:3px;width:102px;height:44px;text-align:center;pointer-events:none}p{margin:0;white-space:nowrap;paint-order:stroke;-webkit-text-stroke:3px #fff}.a{font:bold 25px/32px "Noto Sans CJK SC",sans-serif;color:#5f7f9f}.a i{color:#ee8322;font-family:"Liberation Sans",sans-serif}.b{font:italic bold 12px/12px "Liberation Sans",sans-serif;color:#ee8322;-webkit-text-stroke-width:2px}','<p class="a">龙<i>de</i>船人</p><p class="b">www.imarine.cn</p>');

const tb=s=>s.split(' ').map(n=>n=='|'?'<tool-sep></tool-sep>':n=='v'?'<tool-drop></tool-drop>':n=='w'?'<tool-drop style="--c:#bbb"></tool-drop>':`<tool-button icon="${n}"></tool-button>`).join('');
const items=['CAD 标准','*Tablet PC demo','UCS','UCS II','Web','标注','*标准','布局','参照','参照编辑','插入','查询','对象捕捉','*对象特性','*绘图','绘图顺序','曲面','三维动态观察器','实体','实体编辑','视口','视图','缩放','*图层','文字','*修改','修改 II','渲染','*样式','着色'];
def('cad-app',`:host{display:flex;flex-direction:column;height:100vh;position:relative;background:#ece9d8}
.row{display:flex;height:28px}.row tool-bar{height:28px}
main{flex:1;display:flex;min-height:0;border-top:1px solid #8b8878}
.dock{width:25px;flex:none;display:flex;flex-direction:column}.right{width:27px;border-left:1px solid #fff}
.mid{flex:1;display:flex;flex-direction:column;min-width:0}.view{flex:1;display:flex;min-height:0}drawing-canvas{flex:1}
.tabrow{display:flex;height:17px;border-bottom:1px solid #fff}.tabrow scroll-bar{width:34%;margin:0 18px 0 auto;border-left:9px solid #ece9d8}
text-panel{height:117px;margin-top:2px}
footer{height:20px;border-top:1px solid #fff;background:linear-gradient(#d9d6c6,#ece9d8 20%,#ece9d8 85%,#d5d2bf)}`,
`<title-bar></title-bar><menu-bar></menu-bar>
<div class="row"><tool-bar>${tb('newf open save | print preview publish | cut copy paste match | undo v redo w | pan zoomrt zoomwin zoomprev | props dc palettes | help')}</tool-bar><tool-bar><tool-button icon="tstyle" style="width:26px"></tool-button><combo-box label="文字样式" value="Standard" style="--w:100px"></combo-box><tool-sep></tool-sep><tool-button icon="dstyle"></tool-button><combo-box label="标注样式" value="ISO-25" style="--w:100px"></combo-box></tool-bar></div>
<div class="row"><tool-bar><tool-button icon="layers" style="width:24px"></tool-button><combo-box label="图层" value="0" icons="bulb sun vp lock box" style="--w:300px;--pad:85px"></combo-box>${tb('layercur layerprev')}</tool-bar><tool-bar><combo-box label="颜色" value="ByLayer" icons="box" style="--w:150px;--pad:19px"></combo-box><tool-sep></tool-sep><combo-box label="线型" value="ByLayer" icons="rule" style="--w:160px;--pad:69px"></combo-box><tool-sep></tool-sep><combo-box label="线宽" value="ByLayer" icons="rule" style="--w:126px;--pad:44px;--rule:35px"></combo-box><tool-sep></tool-sep><combo-box label="打印样式" value="ByColor" off style="--w:120px;--pad:9px"></combo-box></tool-bar></div>
<main><div class="dock"><tool-bar vertical style="padding-bottom:9px">${tb('pen marker scribble ty')}</tool-bar><tool-bar vertical>${tb('line xline pline polygon rect arc circle cloud spline ellipse earc iblock mblock point hatch region mtext')}</tool-bar></div>
<ink-panel></ink-panel>
<div class="mid"><div class="view"><drawing-canvas></drawing-canvas><scroll-bar dir="v" at="56 587"></scroll-bar></div>
<div class="tabrow"><layout-tabs></layout-tabs><scroll-bar dir="h" at="233 237"></scroll-bar></div><text-panel></text-panel></div>
<div class="dock right"><tool-bar vertical>${tb('erase rcopy mirror offset array move rotate scale stretch trim extend breakp brk chamfer fillet explode')}</tool-bar></div></main>
<command-line></command-line><footer></footer><task-bar></task-bar>
<popup-menu style="left:1065px;top:63px;width:111px"><menu-item hot sub text="ACAD" style="margin:0 0 2px 2px"></menu-item><hr style="margin:0 0 5px 2px;border:0;border-top:1px solid #aca899"><menu-item text="自定义(C)..." style="margin-left:2px;height:20px"></menu-item></popup-menu>
<popup-menu style="left:1175px;top:63px;width:128px">${items.map(t=>`<menu-item text="${t.replace('*','')}" ${t[0]=='*'?'checked':''}></menu-item>`).join('')}</popup-menu>
<net-meter style="right:72px;top:71px"></net-meter><site-mark></site-mark>`);
</script>
</body>
</html>
